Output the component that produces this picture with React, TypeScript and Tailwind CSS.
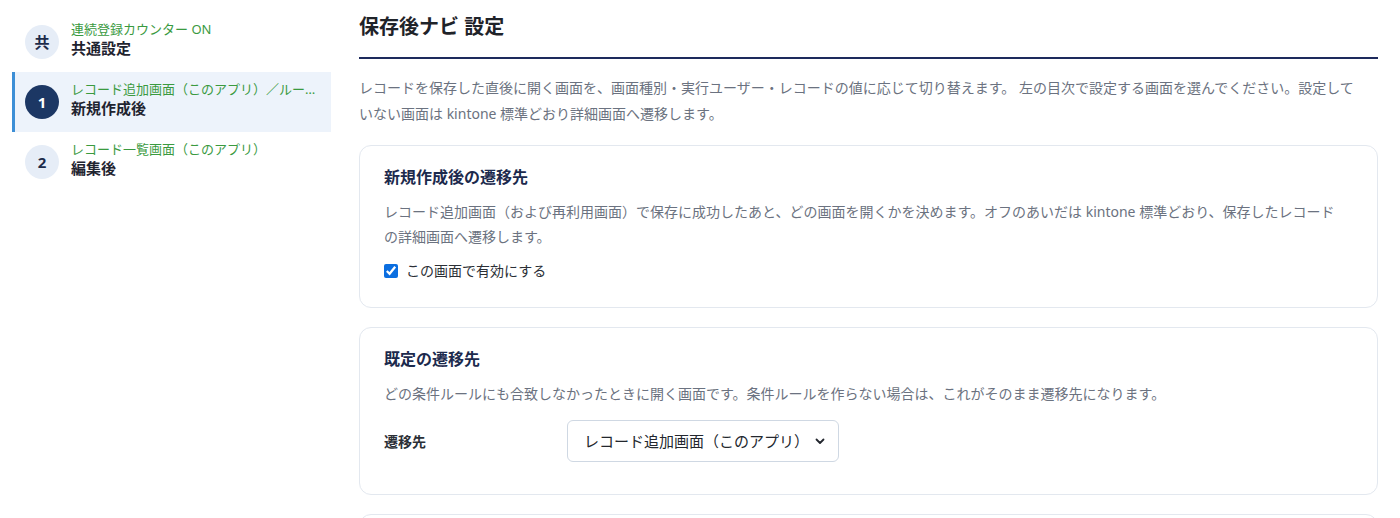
import React from "react";

type NavItem = {
  badge: string;
  sub: string;
  title: string;
  active?: boolean;
};

const navItems: NavItem[] = [
  { badge: "共", sub: "連続登録カウンター ON", title: "共通設定" },
  {
    badge: "1",
    sub: "レコード追加画面（このアプリ）／ルール 1 件",
    title: "新規作成後",
    active: true,
  },
  { badge: "2", sub: "レコード一覧画面（このアプリ）", title: "編集後" },
];

function Sidebar() {
  return (
    <nav className="w-[319px] shrink-0 pt-3 flex flex-col">
      {navItems.map((item) => (
        <div
          key={item.title}
          className={
            item.active
              ? "h-[60px] flex items-center gap-3 pl-[10px] pr-3 border-l-[3px] border-[#3d8fd6] bg-[#edf3fb]"
              : "h-[60px] flex items-center gap-3 pl-[10px] pr-3 border-l-[3px] border-transparent"
          }
        >
          <div
            className={
              item.active
                ? "w-[34px] h-[34px] rounded-full bg-[#1c3764] text-white flex items-center justify-center text-[15px] font-bold shrink-0"
                : "w-[34px] h-[34px] rounded-full bg-[#e6edf7] text-[#1c2b4a] flex items-center justify-center text-[15px] font-bold shrink-0"
            }
          >
            {item.badge}
          </div>
          <div className="min-w-0 flex flex-col pb-[6px]">
            <div className="text-[13px] leading-[18px] text-[#3a9a3f] truncate">{item.sub}</div>
            <div className="text-[15px] leading-[21px] font-bold text-[#1f2430]">{item.title}</div>
          </div>
        </div>
      ))}
    </nav>
  );
}

function Card({ title, children }: { title?: string; children: React.ReactNode }) {
  return (
    <section className="border border-[#e3e8ef] rounded-[12px] bg-white px-6 pt-[19px]">
      {title && <h2 className="text-[16px] leading-[24px] font-bold text-[#1c2a4d]">{title}</h2>}
      {children}
    </section>
  );
}

export default function App() {
  return (
    <div
      className="w-[1400px] h-[518px] overflow-hidden bg-white flex pl-3 pr-[22px]"
      style={{ fontFamily: '"Noto Sans", "Noto Sans CJK JP", sans-serif' }}
    >
      <Sidebar />
      <main className="flex-1 ml-7 pt-3 min-w-0">
        <h1 className="text-[20px] leading-[30px] font-bold text-[#1f2329] pb-[15px] border-b-2 border-[#1d2a5c]">
          保存後ナビ 設定
        </h1>
        <p className="mt-4 text-[14px] leading-[26px] text-[#6b7280]">
          レコードを保存した直後に開く画面を、画面種別・実行ユーザー・レコードの値に応じて切り替えます。 左の目次で設定する画面を選んでください。設定して
          <br />
          いない画面は kintone 標準どおり詳細画面へ遷移します。
        </p>

        <div className="mt-[18px] flex flex-col gap-[19px]">
          <Card title="新規作成後の遷移先">
            <p className="mt-[10px] text-[14px] leading-[25px] text-[#6b7280] whitespace-nowrap">
              レコード追加画面（および再利用画面）で保存に成功したあと、どの画面を開くかを決めます。オフのあいだは kintone 標準どおり、保存したレコード
              <br />
              の詳細画面へ遷移します。
            </p>
            <label className="mt-3 pb-[26px] flex items-center gap-2 text-[14px] leading-[20px] text-[#2b2f36]">
              <input
                type="checkbox"
                defaultChecked
                className="w-[14px] h-[14px] accent-[#0b6ee0]"
              />
              この画面で有効にする
            </label>
          </Card>

          <Card title="既定の遷移先">
            <p className="mt-[10px] text-[14px] leading-[25px] text-[#6b7280]">
              どの条件ルールにも合致しなかったときに開く画面です。条件ルールを作らない場合は、これがそのまま遷移先になります。
            </p>
            <div className="mt-[14px] pb-8 flex items-center">
              <div className="w-[183px] text-[14px] font-bold text-[#2b2f36]">遷移先</div>
              <div className="w-[272px] h-[42px] border border-[#cfd8e3] rounded-[6px] flex items-center justify-between pl-4 pr-3 text-[15px] text-[#23272e]">
                <span>レコード追加画面（このアプリ）</span>
                <svg width="12" height="12" viewBox="0 0 12 12" fill="none">
                  <path d="M2.5 4.5 6 8l3.5-3.5" stroke="#23272e" strokeWidth="1.8" strokeLinecap="round" strokeLinejoin="round" />
                </svg>
              </div>
            </div>
          </Card>

          <Card>
            <div className="h-10" />
          </Card>
        </div>
      </main>
    </div>
  );
}
